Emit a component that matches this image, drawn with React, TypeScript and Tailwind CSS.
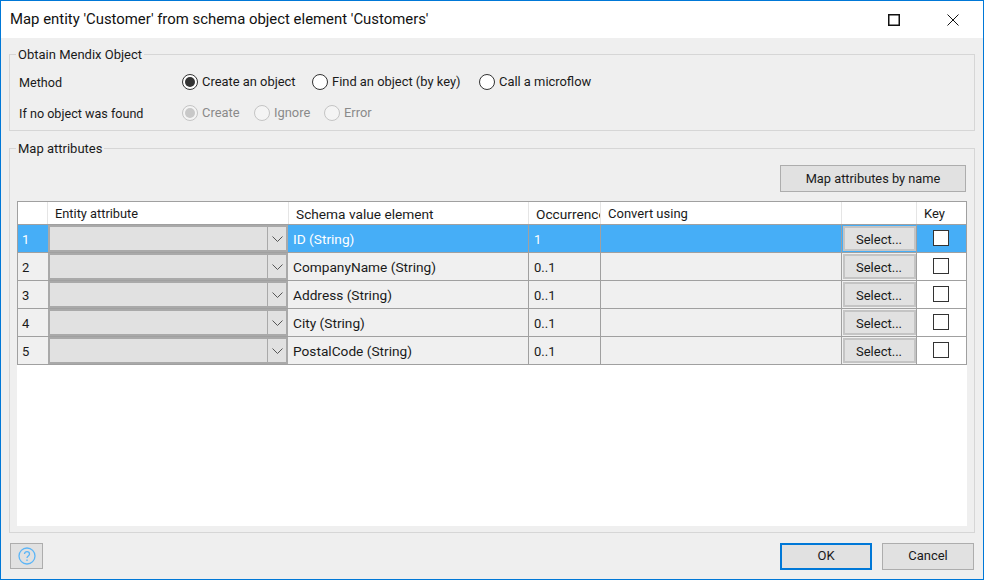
const rows = [
  { id: 1, name: 'ID (String)', occurs: '1' },
  { id: 2, name: 'CompanyName (String)', occurs: '0..1' },
  { id: 3, name: 'Address (String)', occurs: '0..1' },
  { id: 4, name: 'City (String)', occurs: '0..1' },
  { id: 5, name: 'PostalCode (String)', occurs: '0..1' },
];

function Radio({ label, checked, disabled, className }: { label: string; checked?: boolean; disabled?: boolean; className: string }) {
  return (
    <div className={`flex items-center text-[12.9px] ${className}`}>
      <span
        className={`flex h-4 w-4 items-center justify-center rounded-full border ${
          disabled ? 'border-[#c4c4c4] bg-[#f4f4f4]' : 'border-[#333333] bg-white'
        }`}
      >
        {checked && <span className={`h-2.5 w-2.5 rounded-full ${disabled ? 'bg-[#c8c8c8]' : 'bg-[#333333]'}`} />}
      </span>
      <span className={`ml-1 ${disabled ? 'text-[#8a8a8a]' : 'text-[#1a1a1a]'}`}>{label}</span>
    </div>
  );
}

function Row({ id, name, occurs, selected }: { id: number; name: string; occurs: string; selected: boolean }) {
  const cell = selected ? 'bg-[#46aef7] text-white' : 'bg-[#f0f0f0] text-[#1a1a1a]';
  return (
    <div className="flex h-7 border-b border-[#a0a0a0]">
      <div className={`flex w-[30px] items-center pl-[4px] pt-[2px] ${cell}`}>{id}</div>
      <div className="flex w-[240px] border-2 border-[#a9a9a9] bg-[#e1e1e1]">
        <div className="flex-1" />
        <div className="flex w-[19px] items-center justify-center border-l border-[#a9a9a9]">
          <svg width="11" height="6" viewBox="0 0 11 6" fill="none" stroke="#555555">
            <path d="M0.5 0.5 L5.5 5.5 L10.5 0.5" />
          </svg>
        </div>
      </div>
      <div className={`flex w-[241px] items-center border-r border-[#a0a0a0] pl-[5px] pt-[2px] text-[13.7px] ${cell}`}>{name}</div>
      <div className={`flex w-[72px] items-center border-r border-[#a0a0a0] pl-[5px] pt-[2px] ${cell}`}>{occurs}</div>
      <div className={`w-[241px] border-r border-[#a0a0a0] ${cell}`} />
      <div className={`flex w-[75px] items-center justify-center border-r border-[#a0a0a0] ${selected ? 'bg-[#46aef7]' : 'bg-[#f0f0f0]'}`}>
        <div className="flex h-[25px] w-[73px] items-center justify-center border-2 border-[#c4c4c4] bg-[#e1e1e1] pt-[3px] text-[#1a1a1a]">
          Select...
        </div>
      </div>
      <div className={`flex flex-1 items-center justify-center pr-[2px] pb-[2px] ${selected ? 'bg-[#46aef7]' : 'bg-white'}`}>
        <span className="h-4 w-4 border border-[#333333] bg-white" />
      </div>
    </div>
  );
}

export default function App() {
  return (
    <div className="flex h-[580px] w-[984px] flex-col overflow-hidden border border-[#0078d7] bg-[#efefef] font-['Roboto',sans-serif] text-[13px] text-[#1a1a1a]">
      <header className="flex h-[37px] items-center bg-white pl-[9px]">
        <h1 className="flex-1 text-[14.9px] font-normal text-[#111111]">
          Map entity 'Customer' from schema object element 'Customers'
        </h1>
        <svg width="12" height="12" viewBox="0 0 12 12" fill="none" stroke="#111111" strokeWidth="1.5" className="mr-[47px]">
          <rect x="0.75" y="0.75" width="10.5" height="10.5" />
        </svg>
        <svg width="12" height="12" viewBox="0 0 12 12" fill="none" stroke="#111111" className="mr-[24px]">
          <path d="M0.5 0.5 L11.5 11.5 M11.5 0.5 L0.5 11.5" />
        </svg>
      </header>

      <main className="flex flex-1 flex-col px-2 pt-[7px]">
        <fieldset className="h-[86px] border border-[#d6d6d6]">
          <legend className="ml-[6px] h-[18px] px-[2px] leading-[20px]">Obtain Mendix Object</legend>
          <div className="mt-1 flex h-[30px] items-center pl-[9px]">
            <span className="w-[163px] pt-[2px] text-[12.6px]">Method</span>
            <Radio label="Create an object" checked className="w-[130px]" />
            <Radio label="Find an object (by key)" className="w-[167px]" />
            <Radio label="Call a microflow" className="" />
          </div>
          <div className="mt-px flex h-[30px] items-center pl-[9px]">
            <span className="w-[163px] pt-[2px] text-[12.6px]">If no object was found</span>
            <Radio label="Create" checked disabled className="w-[72px]" />
            <Radio label="Ignore" disabled className="w-[70px]" />
            <Radio label="Error" disabled className="" />
          </div>
        </fieldset>

        <fieldset className="mt-2 flex h-[394px] flex-col border border-[#d6d6d6] px-[7px] pb-[4px]">
          <legend className="ml-[-1px] h-[18px] px-[2px] leading-[20px]">Map attributes</legend>
          <div className="mt-[8px] flex justify-end pr-px">
            <button className="h-[27px] w-[186px] border border-[#adadad] bg-[#e1e1e1] text-center text-[12.8px]">
              Map attributes by name
            </button>
          </div>
          <div className="mt-[9px] h-[325px] bg-white">
            <div className="border-t border-r border-l border-[#a0a0a0]">
              <div className="flex h-[23px] border-b border-[#a0a0a0]">
                <div className="w-[30px] border-r border-[#e5e5e5]" />
                <div className="w-[241px] border-r border-[#e5e5e5] pl-[7px] text-[12.8px] leading-[24px]">Entity attribute</div>
                <div className="w-[240px] border-r border-[#e5e5e5] pl-[7px] text-[13.7px] leading-[24px]">Schema value element</div>
                <div className="w-[72px] overflow-hidden border-r border-[#e5e5e5] pl-[7px] text-[13.7px] leading-[24px] whitespace-nowrap">Occurrence</div>
                <div className="w-[241px] border-r border-[#e5e5e5] pl-[7px] leading-[24px]">Convert using</div>
                <div className="w-[75px] border-r border-[#e5e5e5]" />
                <div className="flex-1 pl-[7px] leading-[24px]">Key</div>
              </div>
              {rows.map((r) => (
                <Row key={r.id} {...r} selected={r.id === 1} />
              ))}
            </div>
          </div>
        </fieldset>

        <footer className="flex flex-1 items-center pl-px pr-px">
          <button className="flex h-[26px] w-[33px] items-center justify-center border border-[#adadad] bg-[#e1e1e1]">
            <svg width="18" height="18" viewBox="0 0 18 18" fill="none" stroke="#5bb5f7" strokeWidth="1.3">
              <circle cx="9" cy="9" r="8" />
              <path d="M6.5 7 C6.5 3.8 11.5 3.8 11.5 7 C11.5 9 9 9 9 11" />
              <path d="M9 12.5 V14" />
            </svg>
          </button>
          <div className="flex-1" />
          <button className="h-[27px] w-[92px] border-2 border-[#0078d7] bg-[#e1e1e1]">OK</button>
          <button className="ml-[10px] h-[27px] w-[92px] border border-[#adadad] bg-[#e1e1e1]">Cancel</button>
        </footer>
      </main>
    </div>
  );
}
